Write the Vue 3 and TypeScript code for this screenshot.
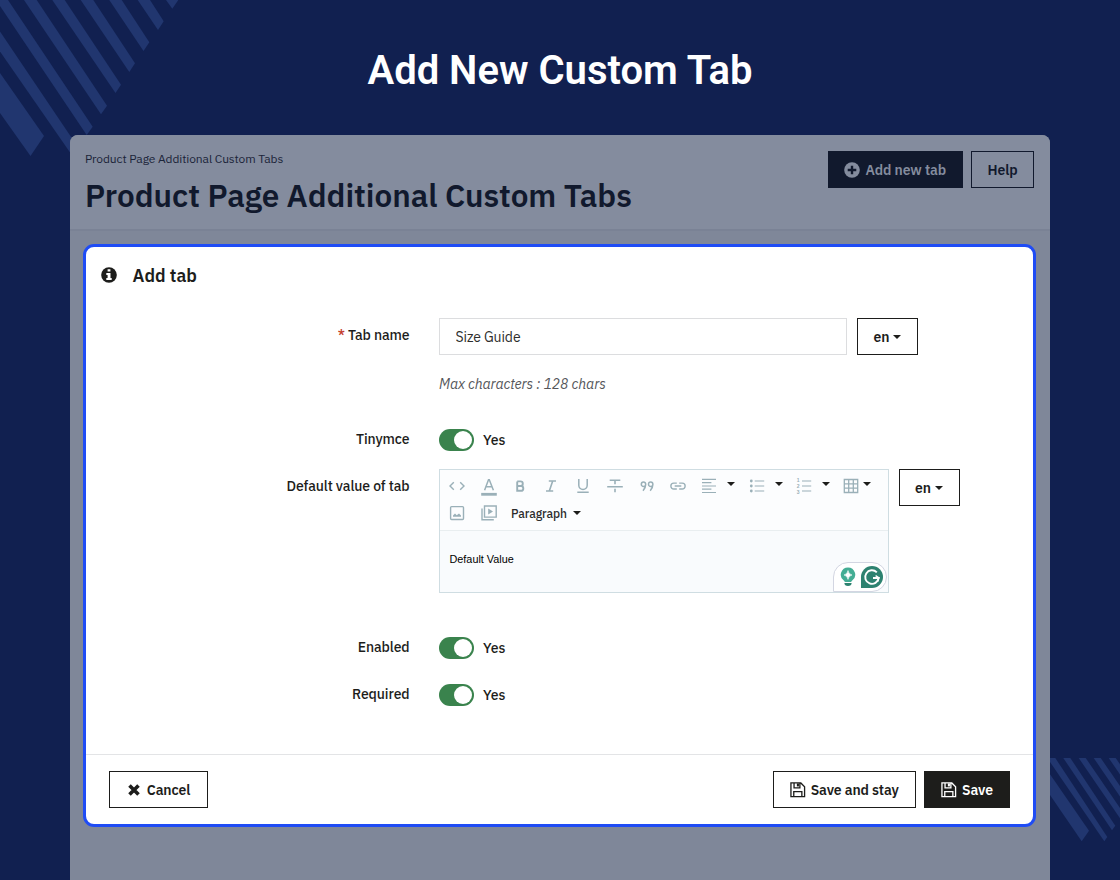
<script setup lang="ts">
import { ref } from 'vue'

interface Tool {
  name: string
  d: string
  width?: number
  caret?: boolean
  cell: number
}

const tabName = ref('Size Guide')

const topStripes: string[] = [
  '0,73 44,136 30.5,156 0,113',
  '0,31.5 78.5,148 72.5,156 0,51.5',
  '-4,0 8,0 92.7,126.7 86.7,135',
  '24,0 36.7,0 107,105.7 101,114.3',
  '52.3,0 64.7,0 121,84.7 115.5,93',
  '80.7,0 93.3,0 135,63.3 129.3,72',
  '109.3,0 121.7,0 149.3,42.3 143.5,51',
  '137.7,0 150,0 163.7,21.3 158,30',
  '166,0 178.3,0 172.3,8.7',
]
const bottomStripes: string[] = [
  '0,16.3 39,72.7 31.7,83.3 0,37',
  '0,0 5.3,0 57.3,79 54.3,83.3 0,4',
  '13.3,0 20.3,0 65.3,67.7 62,72.3',
  '28.7,0 35.7,0 70,50 70,60.3',
  '43.7,0 50.7,0 70,28 70,38.5',
  '58.7,0 65.7,0 70,6.3 70,16.5',
]

const rowOne: Tool[] = [
  { name: 'code', cell: 31.5, width: 1.4, d: 'M-3.2-3.8-7 0l3.8 3.8M3.2-3.8 7 0 3.2 3.8' },
  { name: 'color', cell: 31.5, width: 1.5, d: 'M-4.4 4.2-.5-6.3h.8L4.4 4.2M-3 .8h6' },
  { name: 'bold', cell: 31, width: 1.9, d: 'M-2.8-4.6H.5a2.3 2.3 0 0 1 0 4.6H-2.8M.5 0H.9a2.4 2.4 0 0 1 0 4.8H-2.8V-4.6' },
  { name: 'italic', cell: 32, width: 1.6, d: 'M-2.2-5H5M-5 5H2.2M1.7-5-1.7 5' },
  { name: 'underline', cell: 31.5, width: 1.5, d: 'M-4.2-7v6.3a4.2 4.2 0 0 0 8.4 0V-7M-5.7 6.2H5.7' },
  { name: 'strike', cell: 32, width: 1.6, d: 'M-5.3-5.8H5.3M0-5.8v4M-7.8.7H7.8M0 2.8v3.4' },
  { name: 'quote', cell: 31.5, width: 1.5, d: 'M-1.3-1.8a2.2 2.3 0 1 0-4.4 0 2.2 2.3 0 1 0 4.4 0Q-1.3 1.8-4 4.8M5.9-1.8a2.2 2.3 0 1 0-4.4 0 2.2 2.3 0 1 0 4.4 0Q5.9 1.8 3.2 4.8' },
  { name: 'link', cell: 31, width: 1.4, d: 'M-1.2-2.9h-3a2.9 2.9 0 0 0 0 5.9h3M1.2-2.9h3a2.9 2.9 0 0 1 0 5.9h-3M-3.3 0h6.6' },
  { name: 'align', cell: 47.5, caret: true, width: 1.2, d: 'M-7-6.6H7M-7-3.3H2.4M-7 0H7M-7 3.2H2.4M-7 6.5H7' },
  { name: 'bullets', cell: 47.5, caret: true, width: 1.2, d: 'M-2.3-5H7.2M-2.3 0H7.2M-2.3 5H7.2' },
  { name: 'numbers', cell: 47, caret: true, width: 1.2, d: 'M-2-5H7.2M-2 0H7.2M-2 5H7.2' },
  { name: 'table', cell: 38, caret: true, width: 1.3, d: 'M-6.7-6.5H6.7V6.5H-6.7ZM-6.7-2.2H6.7M-6.7 2.2H6.7M-2.3-6.5V6.5M2.3-6.5V6.5' },
]
</script>

<template>
  <div class="stage">
    <svg class="stripes top" width="200" height="170" viewBox="0 0 200 170">
      <polygon v-for="p in topStripes" :key="p" :points="p" />
    </svg>
    <svg class="stripes bottom" width="70" height="90" viewBox="0 0 70 90">
      <polygon v-for="p in bottomStripes" :key="p" :points="p" />
    </svg>

    <h1 class="headline">Add New Custom Tab</h1>

    <main class="panel">
      <header class="page-head">
        <div class="titles">
          <div class="crumb">Product Page Additional Custom Tabs</div>
          <h2 class="page-title">Product Page Additional Custom Tabs</h2>
        </div>
        <div class="head-actions">
          <button class="btn add">
            <svg width="16" height="16" viewBox="0 0 16 16">
              <circle cx="8" cy="8" r="7.8" fill="#848c9e" />
              <path d="M8 3.7v8.6M3.7 8h8.6" stroke="#11192d" stroke-width="2.4" />
            </svg>
            <span>Add new tab</span>
          </button>
          <button class="btn help"><span>Help</span></button>
        </div>
      </header>

      <section class="card">
        <div class="card-head">
          <svg width="16" height="16" viewBox="0 0 16 16">
            <circle cx="8" cy="8" r="7.8" fill="#1d1d1b" />
            <path d="M6.6 2.3h2.8v2.3H6.6zM5.3 6.1h4.2v5h1.2v1.9H5.3v-1.9h1.3V8H5.3z" fill="#fff" />
          </svg>
          <h3>Add tab</h3>
        </div>

        <div class="form">
          <div class="row name-row">
            <label class="label"><b>*</b> Tab name</label>
            <input v-model="tabName" class="input" type="text" />
            <button class="btn lang"><span>en</span><i class="caret"></i></button>
          </div>
          <p class="hint">Max characters : 128 chars</p>

          <div class="row switch-row tiny">
            <label class="label">Tinymce</label>
            <span class="switch"></span><span class="yes">Yes</span>
          </div>

          <div class="row editor-row">
            <label class="label">Default value of tab</label>
            <div class="editor">
              <div class="toolbar">
                <div class="tools">
                  <div v-for="t in rowOne" :key="t.name" class="tool" :style="{ width: t.cell + 'px' }">
                    <svg width="20" height="20" viewBox="-10 -10 20 20">
                      <path :d="t.d" :stroke-width="t.width" />
                      <rect v-if="t.name === 'color'" class="solid" x="-7.8" y="6.9" width="15.6" height="2.8" />
                      <g v-if="t.name === 'bullets'" class="solid">
                        <circle cx="-5.7" cy="-5" r="1.4" /><circle cx="-5.7" cy="0" r="1.4" /><circle cx="-5.7" cy="5" r="1.4" />
                      </g>
                      <g v-if="t.name === 'numbers'" class="solid digits">
                        <text x="-7.2" y="-3.7">1</text><text x="-7.2" y="2.1">2</text><text x="-7.2" y="7.9">3</text>
                      </g>
                    </svg>
                    <i v-if="t.caret" class="caret" :class="t.name"></i>
                  </div>
                </div>
                <div class="tools second">
                  <div class="tool wide">
                    <svg width="20" height="20" viewBox="-10 -10 20 20">
                      <rect x="-6.4" y="-6.4" width="12.9" height="12.9" rx="1" stroke-width="1.4" />
                      <path class="solid" d="M-4 3.8V2.6l2-2L-.3 2.2 2 .4 4 2.4v1.4z" />
                    </svg>
                  </div>
                  <div class="tool wide">
                    <svg width="20" height="20" viewBox="-10 -10 20 20">
                      <path d="M-4.5-7H7.2V4.1H-4.5ZM-7-4.4V6.7H4.8" stroke-width="1.4" />
                      <path class="solid" d="M-.8-4.4 4-1.4-.8 1.6z" />
                    </svg>
                  </div>
                  <span class="para">Paragraph</span><i class="caret"></i>
                </div>
              </div>
              <div class="content">Default Value</div>
              <div class="assist">
                <svg width="16" height="20" viewBox="0 0 16 20">
                  <path d="M8 .4a7.3 7.3 0 0 1 4.2 13.2q-.9.8-1 1.4H4.8q-.1-.6-1-1.4A7.3 7.3 0 0 1 8 .4z" fill="#43ad94" />
                  <path d="M8 3.5Q8.6 7.4 12 8 8.6 8.6 8 12.4 7.4 8.6 4 8 7.4 7.4 8 3.5z" fill="#fff" stroke="#fff" stroke-width=".6" />
                  <path d="M4.4 15.9h7.2q0 3-3.6 3t-3.6-3z" fill="#2d8270" />
                </svg>
                <svg width="22" height="22" viewBox="0 0 22 22">
                  <path d="M11 0a11 11 0 0 1 0 22H0V11A11 11 0 0 1 11 0z" fill="#2d8270" />
                  <path d="M15.8 6.3A6.8 6.8 0 1 0 17.7 12H12" fill="none" stroke="#fff" stroke-width="1.9" />
                  <path d="m14.6 9.6 3.3 2.2-1.3 4" fill="none" stroke="#fff" stroke-width="1.3" />
                </svg>
              </div>
            </div>
            <button class="btn lang"><span>en</span><i class="caret"></i></button>
          </div>

          <div class="row switch-row enabled">
            <label class="label">Enabled</label>
            <span class="switch"></span><span class="yes">Yes</span>
          </div>
          <div class="row switch-row required">
            <label class="label">Required</label>
            <span class="switch"></span><span class="yes">Yes</span>
          </div>
        </div>

        <footer class="card-foot">
          <button class="btn cancel">
            <svg width="14" height="14" viewBox="0 0 14 14">
              <path d="m2.5 2.5 9 9m0-9-9 9" stroke="#1d1d1b" stroke-width="3.6" />
            </svg>
            <span>Cancel</span>
          </button>
          <button class="btn stay">
            <svg width="16" height="16" viewBox="0 0 17 17" fill="none" stroke="currentColor" stroke-width="1.4">
              <path d="M1 1h10.5l4 4v10.6H1zM4 15.4v-5.2h8.6v5.2M4.3 1.2v5h6.2v-5" />
              <path d="M8.4 1.5v3.2" stroke-width="2.2" />
            </svg>
            <span>Save and stay</span>
          </button>
          <button class="btn save">
            <svg width="16" height="16" viewBox="0 0 17 17" fill="none" stroke="currentColor" stroke-width="1.4">
              <path d="M1 1h10.5l4 4v10.6H1zM4 15.4v-5.2h8.6v5.2M4.3 1.2v5h6.2v-5" />
              <path d="M8.4 1.5v3.2" stroke-width="2.2" />
            </svg>
            <span>Save</span>
          </button>
        </footer>
      </section>
    </main>
  </div>
</template>

<style>
body {
  margin: 0;
  background: #112050;
}
</style>

<style scoped>
.stage {
  position: relative;
  box-sizing: border-box;
  width: 1120px;
  height: 880px;
  overflow: hidden;
  background: #112050;
  color: #1d1d1b;
  font-family: "IBM Plex Sans", Roboto, "Liberation Sans", sans-serif;
  font-size: 14px;
  letter-spacing: -0.1px;
}
.stage * { box-sizing: border-box; }
.stripes { position: absolute; fill: #21366f; }
.top { left: 0; top: 0; }
.bottom { left: 1050px; top: 758px; }
.headline {
  margin: 0;
  padding-top: 47px;
  height: 135px;
  text-align: center;
  color: #fff;
  font: 600 40px/48px Roboto, sans-serif;
  letter-spacing: 0;
}
.panel {
  position: relative;
  width: 980px;
  height: 760px;
  margin: 0 auto;
  border-radius: 8px 8px 0 0;
  background: #7f8799;
  overflow: hidden;
}
.page-head {
  display: flex;
  justify-content: space-between;
  height: 96px;
  padding: 16px 16px 0 15px;
  background: #848c9e;
  border-bottom: 2px solid #7a8295;
}
.titles { margin-top: -1px; }
.crumb { line-height: 18px; font-size: 12px; color: #1b2439; }
.page-title { margin: 7px 0 0; font-size: 31.5px; line-height: 42px; font-weight: 600; color: #11192d; white-space: nowrap; letter-spacing: -0.03px; }
.head-actions { display: flex; gap: 8px; }
.btn {
  display: flex;
  align-items: center;
  justify-content: center;
  flex: none;
  height: 37px;
  padding: 0;
  border: 1px solid #1d1d1b;
  background: #fff;
  color: #1d1d1b;
  font: inherit;
  font-weight: 600;
  letter-spacing: inherit;
  white-space: nowrap;
}
.add { width: 135.5px; gap: 5px; background: #11192d; border-color: #11192d; color: #848c9e; }
.help { width: 63px; background: transparent; border-color: #11192d; color: #11192d; }
.card {
  width: 953px;
  height: 583px;
  margin: 13px 0 0 13px;
  border: 3px solid #1f4cf5;
  border-radius: 11px;
  background: #fff;
}
.card-head { display: flex; align-items: center; gap: 15.5px; height: 56px; padding-left: 15px; }
.card-head h3 { margin: 0; font-size: 17.7px; font-weight: 600; letter-spacing: 0; }
.form { height: 451px; padding-top: 15px; }
.row { display: flex; align-items: flex-start; }
.label {
  flex: none;
  width: 323.5px;
  margin-right: 29px;
  line-height: 20px;
  text-align: right;
  font-weight: 500;
  white-space: nowrap;
}
.label b { color: #c43c2c; font-weight: 500; }
.name-row .label { padding-top: 7px; }
.input {
  width: 408.5px;
  height: 37px;
  margin-right: 10px;
  padding: 0 16px;
  border: 1px solid #dcdddf;
  outline: none;
  background: #fff;
  color: #2d2e2c;
  font: inherit;
  letter-spacing: inherit;
}
.lang { width: 61px; gap: 4px; }
.caret {
  width: 0;
  height: 0;
  border: 4px solid transparent;
  border-top-color: #1d1d1b;
  border-bottom: 0;
}
.hint { margin: 19px 0 0 353px; line-height: 20px; font-style: italic; color: #55565a; }
.switch-row { align-items: center; height: 22px; }
.switch-row .label { position: relative; top: -1px; }
.tiny { margin-top: 35px; }
.switch {
  display: flex;
  justify-content: flex-end;
  width: 35.5px;
  height: 21.5px;
  padding: 1.75px;
  border-radius: 11px;
  background: #3a834d;
}
.switch::after { content: ""; width: 18px; height: 18px; border-radius: 50%; background: #fff; }
.yes { margin-left: 9px; font-weight: 500; }
.editor-row { margin-top: 18px; }
.editor-row .label { padding-top: 7px; }
.editor {
  position: relative;
  width: 450px;
  height: 124px;
  margin-right: 10px;
  border: 1px solid #cfdde2;
  background: #f9fbfd;
}
.toolbar { height: 61px; padding: 6px 0 0 7.5px; background: #fcfdfe; border-bottom: 1px solid #e9eef0; }
.tools { display: flex; height: 20px; }
.second { margin-top: 7px; align-items: center; }
.tool { display: flex; flex: none; align-items: flex-start; }
.wide { width: 31.5px; }
.tool svg { flex: none; fill: none; stroke: #9ab0b8; }
.tool svg .solid { fill: #9ab0b8; stroke: none; }
.digits text { font: bold 5px "Liberation Sans", sans-serif; letter-spacing: 0; }
.tool .caret { margin: 6px 0 0 8px; }
.tool .caret.table { margin-left: 2px; }
.para { margin: 0 6px 0 1px; font-size: 12px; font-weight: 500; color: #2c2c2c; }
.content { padding: 21px 0 0 10px; font: 10.85px/14px "Liberation Sans", sans-serif; letter-spacing: 0; color: #000; }
.assist {
  position: absolute;
  right: 0.5px;
  bottom: 0.5px;
  display: flex;
  align-items: center;
  gap: 5px;
  width: 54.5px;
  height: 30px;
  padding-left: 6px;
  border: 1px solid #d3d6e2;
  border-radius: 15px 15px 15px 0;
  background: #fff;
}
.enabled { margin-top: 44px; }
.required { margin-top: 25px; }
.card-foot { display: flex; height: 70px; padding: 16px 23px 0; border-top: 1px solid #e3e4e6; }
.cancel { width: 99px; gap: 6px; margin-right: auto; }
.stay { width: 143.5px; gap: 5px; margin-right: 8px; }
.save { width: 86px; gap: 5px; background: #1d1d1b; color: #fff; }
</style>
